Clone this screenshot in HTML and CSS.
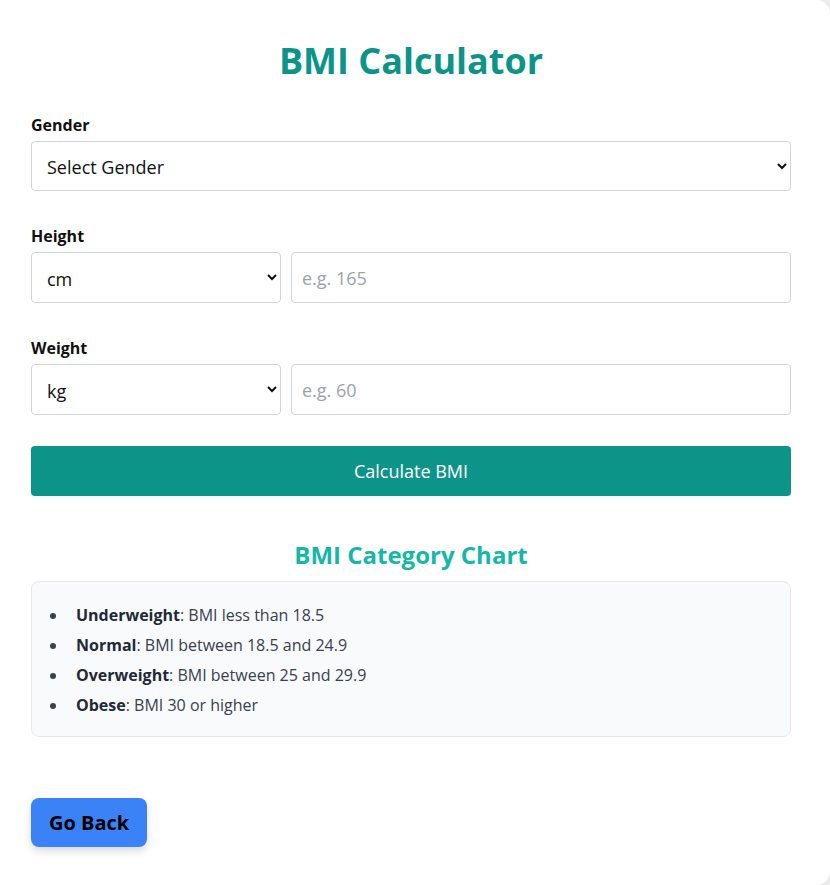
FILE: index.html
```html
<!DOCTYPE html>
<html lang="en">
<head>
<meta charset="utf-8">
<title>BMI Calculator</title>
<link rel="stylesheet" href="styles.css">
</head>
<body>
<main class="card">
  <h1 class="title">BMI Calculator</h1>
  <div class="group">
    <label class="label" for="gender">Gender</label>
    <select id="gender" class="field select field-full">
      <option>Select Gender</option>
      <option>Male</option>
      <option>Female</option>
    </select>
  </div>
  <div class="group">
    <label class="label" for="height">Height</label>
    <div class="row">
      <select class="field select unit">
        <option>cm</option>
        <option>ft/in</option>
      </select>
      <input id="height" class="field value" type="text" placeholder="e.g. 165">
    </div>
  </div>
  <div class="group">
    <label class="label" for="weight">Weight</label>
    <div class="row">
      <select class="field select unit">
        <option>kg</option>
        <option>lb</option>
      </select>
      <input id="weight" class="field value" type="text" placeholder="e.g. 60">
    </div>
  </div>
  <button class="calc" type="button">Calculate BMI</button>
  <h2 class="chart-title">BMI Category Chart</h2>
  <div class="chart">
    <ul class="chart-list">
      <li><strong>Underweight</strong>: BMI less than 18.5</li>
      <li><strong>Normal</strong>: BMI between 18.5 and 24.9</li>
      <li><strong>Overweight</strong>: BMI between 25 and 29.9</li>
      <li><strong>Obese</strong>: BMI 30 or higher</li>
    </ul>
  </div>
  <button class="back" type="button">Go Back</button>
</main>
</body>
</html>
```

FILE: styles.css
```css
* { box-sizing: border-box; }
html, body { margin: 0; padding: 0; }
body {
  background: #ececec;
  font-family: "Open Sans", "Noto Sans", sans-serif;
  color: #111;
}
.card {
  background: #fff;
  width: 830px;
  height: 885px;
  border-radius: 0 14px 14px 0;
  padding: 39px 39px 0 31px;
}
.title {
  margin: 0 0 30px;
  font-size: 36px;
  line-height: 44px;
  font-weight: 700;
  text-align: center;
  color: #0d9488;
}
.group { margin-bottom: 33px; }
.label {
  display: block;
  font-size: 16px;
  line-height: 24px;
  font-weight: 700;
  margin-bottom: 4px;
  color: #111;
}
.field {
  height: 50px;
  border: 1px solid #d1d5db;
  border-radius: 4px;
  background: #fff;
  font-family: inherit;
  font-size: 18px;
  color: #111;
  padding: 1px 12px 0 10px;
}
.select { padding: 2px 19px 0 11px; }
.field-full { width: 100%; }
.row { display: flex; gap: 10px; }
.row .field { height: 51px; }
.unit { width: 250px; flex: none; }
.value { flex: 1; min-width: 0; }
.value::placeholder { color: #9ca3af; }
.calc {
  display: block;
  width: 100%;
  height: 50px;
  margin-top: -2px;
  border: 0;
  border-radius: 4px;
  background: #0d9488;
  color: #fff;
  font-family: inherit;
  font-size: 18px;
}
.chart-title {
  margin: 43px 0 10px;
  font-size: 24px;
  line-height: 32px;
  font-weight: 700;
  text-align: center;
  color: #14b8a6;
}
.chart {
  background: #f8fafc;
  border: 1px solid #e5e7eb;
  border-radius: 8px;
  padding: 18px 16px 16px;
}
.chart-list {
  margin: 0;
  padding-left: 2px;
  list-style: none;
  font-size: 16px;
  line-height: 30px;
  color: #374151;
}
.chart-list li::before {
  content: "";
  display: inline-block;
  width: 6px;
  height: 6px;
  border-radius: 50%;
  background: #374151;
  margin-right: 20px;
  vertical-align: middle;
  position: relative;
  top: -1px;
}
.chart-list strong { color: #1f2937; }
.back {
  display: block;
  margin-top: 61px;
  height: 49px;
  padding: 0 18px;
  border: 0;
  border-radius: 8px;
  background: #3b82f6;
  color: #000;
  font-family: inherit;
  font-size: 20px;
  font-weight: 700;
  box-shadow: 0 4px 8px rgba(0,0,0,0.15);
}
```
